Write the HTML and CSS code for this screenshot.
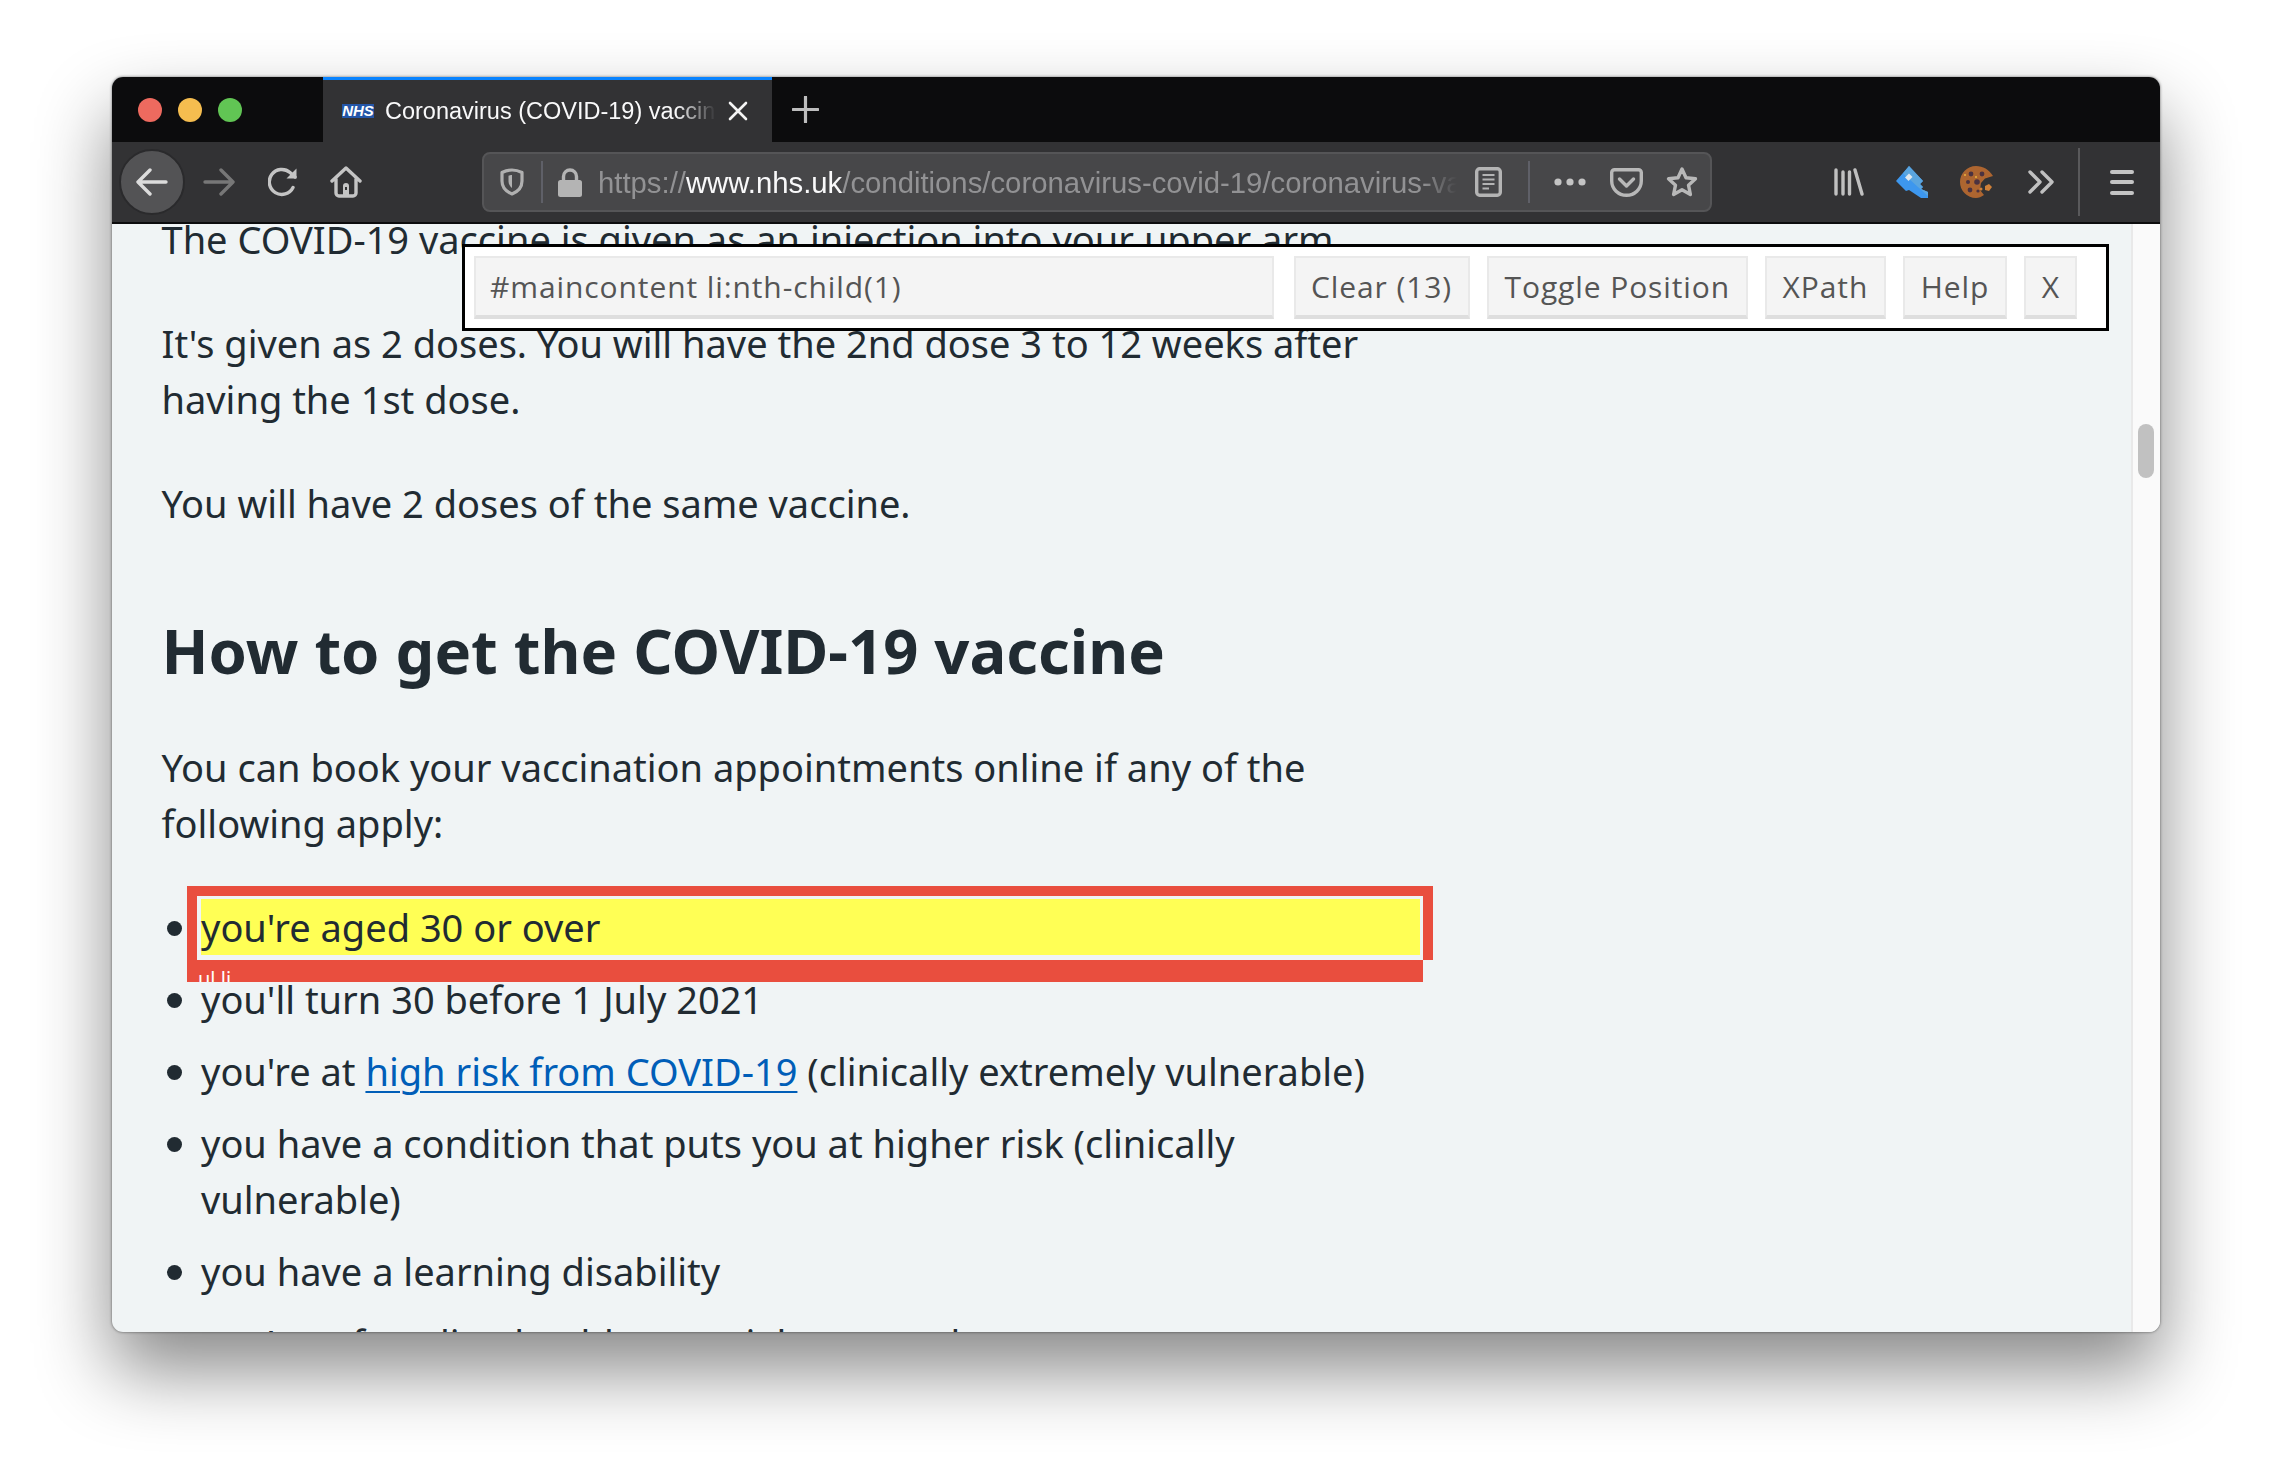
FILE: index.html
```html
<!DOCTYPE html>
<html lang="en">
<head>
<meta charset="utf-8">
<title>Coronavirus (COVID-19) vaccine</title>
<link rel="stylesheet" href="styles.css">
</head>
<body>
<div class="window">
  <div class="titlebar">
    <div class="lights"><i class="light red"></i><i class="light yellow"></i><i class="light green"></i></div>
    <div class="tab">
      <span class="nhs">NHS</span>
      <span class="tab-title">Coronavirus (COVID-19) vaccine</span>
      <svg class="tab-close" width="20" height="20" viewBox="0 0 20 20"><path d="M2 2 18 18M18 2 2 18" stroke="#f4f4f4" stroke-width="2.6" stroke-linecap="round"/></svg>
    </div>
    <svg class="new-tab" width="27" height="27" viewBox="0 0 27 27"><path d="M13.5 1V26M1 13.500H26" stroke="#bdbdbd" stroke-width="3.200" stroke-linecap="round"/></svg>
  </div>
  <div class="toolbar">
    <div class="back">
      <svg width="32" height="28" viewBox="0 0 32 28"><path d="M14 2 2 14 14 26M2.500 14H30" fill="none" stroke="#dcdcdc" stroke-width="3.400" stroke-linecap="round" stroke-linejoin="round"/></svg>
    </div>
    <svg class="i-forward" width="32" height="28" viewBox="0 0 32 28"><path d="M18 2 30 14 18 26M29.500 14H2" fill="none" stroke="#777" stroke-width="3.400" stroke-linecap="round" stroke-linejoin="round"/></svg>
    <svg class="i-reload" width="30" height="30" viewBox="0 0 30 30"><path d="M25 20.500A12.500 12.500 0 1 1 22 5.500L27 10" fill="none" stroke="#c4c4c4" stroke-width="3.400" stroke-linecap="round"/><path d="M28.500 1.500V11.500H18.500Z" fill="#c4c4c4"/></svg>
    <svg class="i-home" width="32" height="32" viewBox="0 0 32 32"><path d="M2 15 16 2 30 15M6 13V27A3 3 0 0 0 9 30H23A3 3 0 0 0 26 27V13" fill="none" stroke="#c4c4c4" stroke-width="3.400" stroke-linecap="round" stroke-linejoin="round"/><path d="M13 29V20A3 3 0 0 1 19 20V29Z" fill="#c4c4c4"/><rect x="15" y="21" width="2" height="3" fill="#333"/></svg>
    <div class="urlbar">
      <svg class="u-shield" width="24" height="28" viewBox="0 0 24 28"><path d="M12 2C8 2 5 3 2 4.500V13C2 20 7 24 12 26C17 24 22 20 22 13V4.500C19 3 16 2 12 2Z" fill="none" stroke="#b0b0b0" stroke-width="3.200" stroke-linejoin="round"/><path d="M12 7C10.500 7 9.500 7.300 8.500 7.800V13C8.500 16 10 18.500 12 20Z" fill="#b0b0b0"/></svg>
      <i class="u-sep"></i>
      <svg class="u-lock" width="24" height="29" viewBox="0 0 24 29"><path d="M5.500 13V8.500A6.500 6.500 0 0 1 18.500 8.500V13" fill="none" stroke="#b4b4b4" stroke-width="3.400"/><rect y="12" width="24" height="17" rx="2.500" fill="#b4b4b4"/></svg>
      <div class="url"><span class="url-dim">https://</span><span class="url-host">www.nhs.uk</span><span class="url-dim">/conditions/coronavirus-covid-19/coronavirus-vaccination/how-to-get</span></div>
      <svg class="u-reader" width="27" height="30" viewBox="0 0 27 30"><rect x="1.700" y="1.700" width="23.600" height="26.600" rx="3" fill="none" stroke="#b4b4b4" stroke-width="3.400"/><path d="M7.500 8H19.500M7.500 12.500H19.500M7.500 17H19.500M7.500 21.500H14" stroke="#b4b4b4" stroke-width="2"/></svg>
      <i class="u-sep u-sep2"></i>
      <svg class="u-dots" width="32" height="8" viewBox="0 0 32 8"><circle cx="4" cy="4" r="3.600" fill="#c4c4c4"/><circle cx="16" cy="4" r="3.600" fill="#c4c4c4"/><circle cx="28" cy="4" r="3.600" fill="#c4c4c4"/></svg>
      <svg class="u-pocket" width="33" height="29" viewBox="0 0 33 29"><path d="M4.500 1.700H28.500A2.800 2.800 0 0 1 31.300 4.500V13C31.300 21 24.500 27.300 16.500 27.300S1.700 21 1.700 13V4.500A2.800 2.800 0 0 1 4.500 1.700Z" fill="none" stroke="#b8b8b8" stroke-width="3.400"/><path d="M9.500 11 16.500 18 23.500 11" fill="none" stroke="#b8b8b8" stroke-width="3.400" stroke-linecap="round" stroke-linejoin="round"/></svg>
      <svg class="u-star" width="32" height="32" viewBox="0 0 32 32"><path d="M16 3 20 11.700 29.500 12.800 22.500 19.200 24.400 28.500 16 23.800 7.600 28.500 9.500 19.200 2.500 12.800 12 11.700Z" fill="none" stroke="#b8b8b8" stroke-width="3.400" stroke-linejoin="round"/></svg>
    </div>
    <svg class="t-library" width="30" height="28" viewBox="0 0 30 28"><path d="M2 2V26M9 4V26M15.500 4V26M21 2 28 26" stroke="#c0c0c0" stroke-width="3.400" stroke-linecap="round"/></svg>
    <svg class="t-key" width="32" height="32" viewBox="0 0 32 32"><path d="M0 15 13 0 27 15 24 18 27 21 25 23 32 26V32H25L13 24 10 25Z" fill="#3d97ee"/><path d="M7 7.500 13 0 27 15 24 18 27 21 25 23 32 26V30Z" fill="#5aa5df"/><path d="M9 11.500 13 7.500 16.500 11 12.500 15Z" fill="#dfe7ee"/></svg>
    <svg class="t-cookie" width="33" height="32" viewBox="0 0 33 32"><path d="M16 0C23 0 29 3.500 33 10L25 12.500 21 17 20 24 24 29C21 31 19 32 16 32A16 16 0 0 1 16 0Z" fill="#ad6530"/><circle cx="11" cy="8" r="2.400" fill="#4b3240"/><circle cx="22" cy="8" r="2.400" fill="#4b3240"/><circle cx="8" cy="16" r="2" fill="#4b3240"/><circle cx="17" cy="16" r="2.800" fill="#4b3240"/><circle cx="10" cy="24" r="2.400" fill="#4b3240"/><circle cx="18" cy="25" r="1.600" fill="#4b3240"/><circle cx="5" cy="9" r="1" fill="#e8b23c"/><circle cx="16" cy="11" r="1" fill="#e8b23c"/><path d="M25 20 29 18 32 21 29 25 25 24Z" fill="#cf8038"/><circle cx="21" cy="23" r="1.500" fill="#cf8038"/></svg>
    <svg class="t-chev" width="26" height="24" viewBox="0 0 26 24"><path d="M2 2 12 12 2 22M14 2 24 12 14 22" fill="none" stroke="#c0c0c0" stroke-width="3.400" stroke-linecap="round" stroke-linejoin="round"/></svg>
    <i class="t-sep"></i>
    <div class="t-menu"><i></i><i></i><i></i></div>
  </div>
  <div class="viewport">
    <main class="page">
      <p>The COVID-19 vaccine is given as an injection into your upper arm.</p>
      <p>It's given as 2 doses. You will have the 2nd dose 3 to 12 weeks after having the 1st dose.</p>
      <p>You will have 2 doses of the same vaccine.</p>
      <h2>How to get the COVID-19 vaccine</h2>
      <p>You can book your vaccination appointments online if any of the following apply:</p>
      <ul>
        <li class="hit">you're aged 30 or over
          <div class="outline"><div class="outline-label">ul li</div></div>
        </li>
        <li>you'll turn 30 before 1 July 2021</li>
        <li>you're at <a href="#">high risk from COVID-19</a> (clinically extremely vulnerable)</li>
        <li>you have a condition that puts you at higher risk (clinically vulnerable)</li>
        <li>you have a learning disability</li>
        <li>you're a frontline health or social care worker</li>
      </ul>
    </main>
    <div class="scrollbar"><div class="thumb"></div></div>
    <div class="gadget">
      <div class="g-input">#maincontent li:nth-child(1)</div>
      <div class="g-btn">Clear (13)</div>
      <div class="g-btn">Toggle Position</div>
      <div class="g-btn">XPath</div>
      <div class="g-btn">Help</div>
      <div class="g-btn">X</div>
    </div>
  </div>
</div>
</body>
</html>
```

FILE: styles.css
```css
* { box-sizing: border-box; }
html, body { margin: 0; padding: 0; height: 100%; background: #fff; overflow: hidden; }
body { padding: 77px 112px 0; }
i { display: block; }
svg { display: block; flex: none; }

.window {
  width: 2048px;
  height: 1255px;
  border-radius: 11px;
  overflow: hidden;
  display: flex;
  flex-direction: column;
  background: #f0f4f5;
  box-shadow: 0 38px 75px rgba(0,0,0,.47), 0 0 3px rgba(0,0,0,.55);
}

/* title bar */
.titlebar { height: 65px; flex: none; background: #0c0c0d; display: flex; align-items: stretch; }
.lights { width: 211px; display: flex; align-items: center; gap: 16px; padding-left: 26px; padding-top: 0; }
.light { width: 24px; height: 24px; border-radius: 50%; }
.red { background: #ee6a5f; }
.yellow { background: #f5bd4f; }
.green { background: #61c554; }
.tab {
  width: 449px;
  background: #323234;
  border-top: 3px solid #0a84ff;
  display: flex;
  align-items: center;
  padding-left: 19px;
}
.nhs {
  width: 32px; height: 14px;
  background: #2456a8;
  color: #fff;
  font: italic 700 15px/14px "Liberation Sans", sans-serif;
  text-align: center;
  flex: none;
}
.tab-title {
  font: 23.500px "Liberation Sans", sans-serif;
  color: #f9f9fa;
  margin-left: 11px;
  width: 331px;
  white-space: nowrap;
  overflow: hidden;
  -webkit-mask-image: linear-gradient(90deg, #000 88%, transparent);
  mask-image: linear-gradient(90deg, #000 88%, transparent);
}
.tab-close { margin-left: 12px; }
.new-tab { align-self: center; margin-left: 20px; }

/* toolbar */
.toolbar {
  height: 82px;
  flex: none;
  background: #323234;
  border-bottom: 2px solid #0c0c0d;
  display: flex;
  align-items: center;
  padding-left: 7px;
}
.back {
  width: 66px; height: 66px;
  border-radius: 50%;
  background: #535355;
  border: 2px solid #2a2a2c;
  display: flex; align-items: center; justify-content: center;
}
.i-forward { margin-left: 18px; }
.i-reload { margin-left: 33px; }
.i-home { margin-left: 32px; }
.urlbar {
  margin-left: 120px;
  width: 1230px; height: 60px;
  border-radius: 8px;
  background: #474749;
  border: 2px solid #555557;
  display: flex; align-items: center;
  padding-left: 16px;
}
.u-sep { width: 2px; height: 42px; background: #5f6068; margin-left: 17px; }
.u-lock { margin-left: 15px; }
.url {
  margin-left: 16px;
  padding-top: 2px;
  width: 859px;
  white-space: nowrap;
  overflow: hidden;
  font: 29.300px "Liberation Sans", sans-serif;
  -webkit-mask-image: linear-gradient(90deg, #000 96%, transparent);
  mask-image: linear-gradient(90deg, #000 96%, transparent);
}
.url-dim { color: #929294; }
.url-host { color: #f9f9fa; }
.u-reader { margin-left: 18px; }
.u-sep2 { margin-left: 26px; }
.u-dots { margin-left: 24px; }
.u-pocket { margin-left: 24px; }
.u-star { margin-left: 23px; }
.t-library { margin-left: 122px; }
.t-key { margin-left: 32px; }
.t-cookie { margin-left: 32px; }
.t-chev { margin-left: 35px; }
.t-sep { width: 2px; height: 68px; background: #59595b; margin-left: 24px; }
.t-menu { margin-left: 30px; width: 24px; display: flex; flex-direction: column; gap: 6.500px; }
.t-menu i { height: 4px; border-radius: 2px; background: #c4c4c4; }

/* page */
.viewport { flex: 1; min-height: 0; position: relative; display: flex; overflow: hidden; }
.page {
  flex: 1;
  min-width: 0;
  margin-top: -13px;
  padding-left: 49.500px;
  font-family: "Noto Sans", sans-serif;
  font-size: 38px;
  line-height: 56px;
  color: #212b32;
}
.page p { margin: 0 0 48px; width: 1258px; }
.page h2 { margin: 81px 0 51px; font-size: 61.500px; line-height: 76px; font-weight: 700; }
.page ul { margin: 0; padding: 0 0 0 39.500px; list-style: none; width: 1258px; }
.page li { margin-bottom: 16px; position: relative; }
.page li::before {
  content: "";
  position: absolute;
  left: -34px; top: 22px;
  width: 15px; height: 15px;
  border-radius: 50%;
  background: #212b32;
}
.page a { color: #005eb8; text-decoration: underline; text-decoration-thickness: 2px; text-underline-offset: 5px; }
.hit { background: #ffff55; }
.outline {
  position: absolute;
  left: -14px; right: -13px; top: -13px; bottom: -5px;
  border: 10px solid #e94e3e;
  border-bottom: 0;
}
.outline-label {
  position: absolute;
  left: -10px; right: 0; top: 100%;
  height: 22px;
  background: #e94e3e;
  color: #fff;
  font: 20px/22px "Noto Sans", sans-serif;
  padding: 8px 0 0 11px;
  overflow: hidden;
}
.scrollbar {
  width: 29px; flex: none;
  background: #fafafa;
  border-left: 2px solid #e9e9e9;
  padding: 200px 0 0 5px;
}
.thumb { width: 16px; height: 54px; border-radius: 8px; background: #c1c1c1; }

/* selector gadget */
.gadget {
  position: absolute;
  left: 350px; top: 20px;
  width: 1647px; height: 87px;
  background: #fff;
  border: 3px solid #000;
  display: flex;
  padding: 9px 0 0 9px;
  gap: 17.500px;
  font-family: "Open Sans", sans-serif;
  font-size: 30px;
  letter-spacing: .9px;
  color: #555;
}
.g-input, .g-btn {
  height: 63px;
  line-height: 58px;
  background: #f4f4f4;
  border: 2px solid #e9e9e9;
  border-bottom: 4px solid #dedede;
  white-space: nowrap;
}
.g-input { width: 800px; padding-left: 14px; margin-right: 2px; }
.g-btn { padding: 0 15.500px; }
```
